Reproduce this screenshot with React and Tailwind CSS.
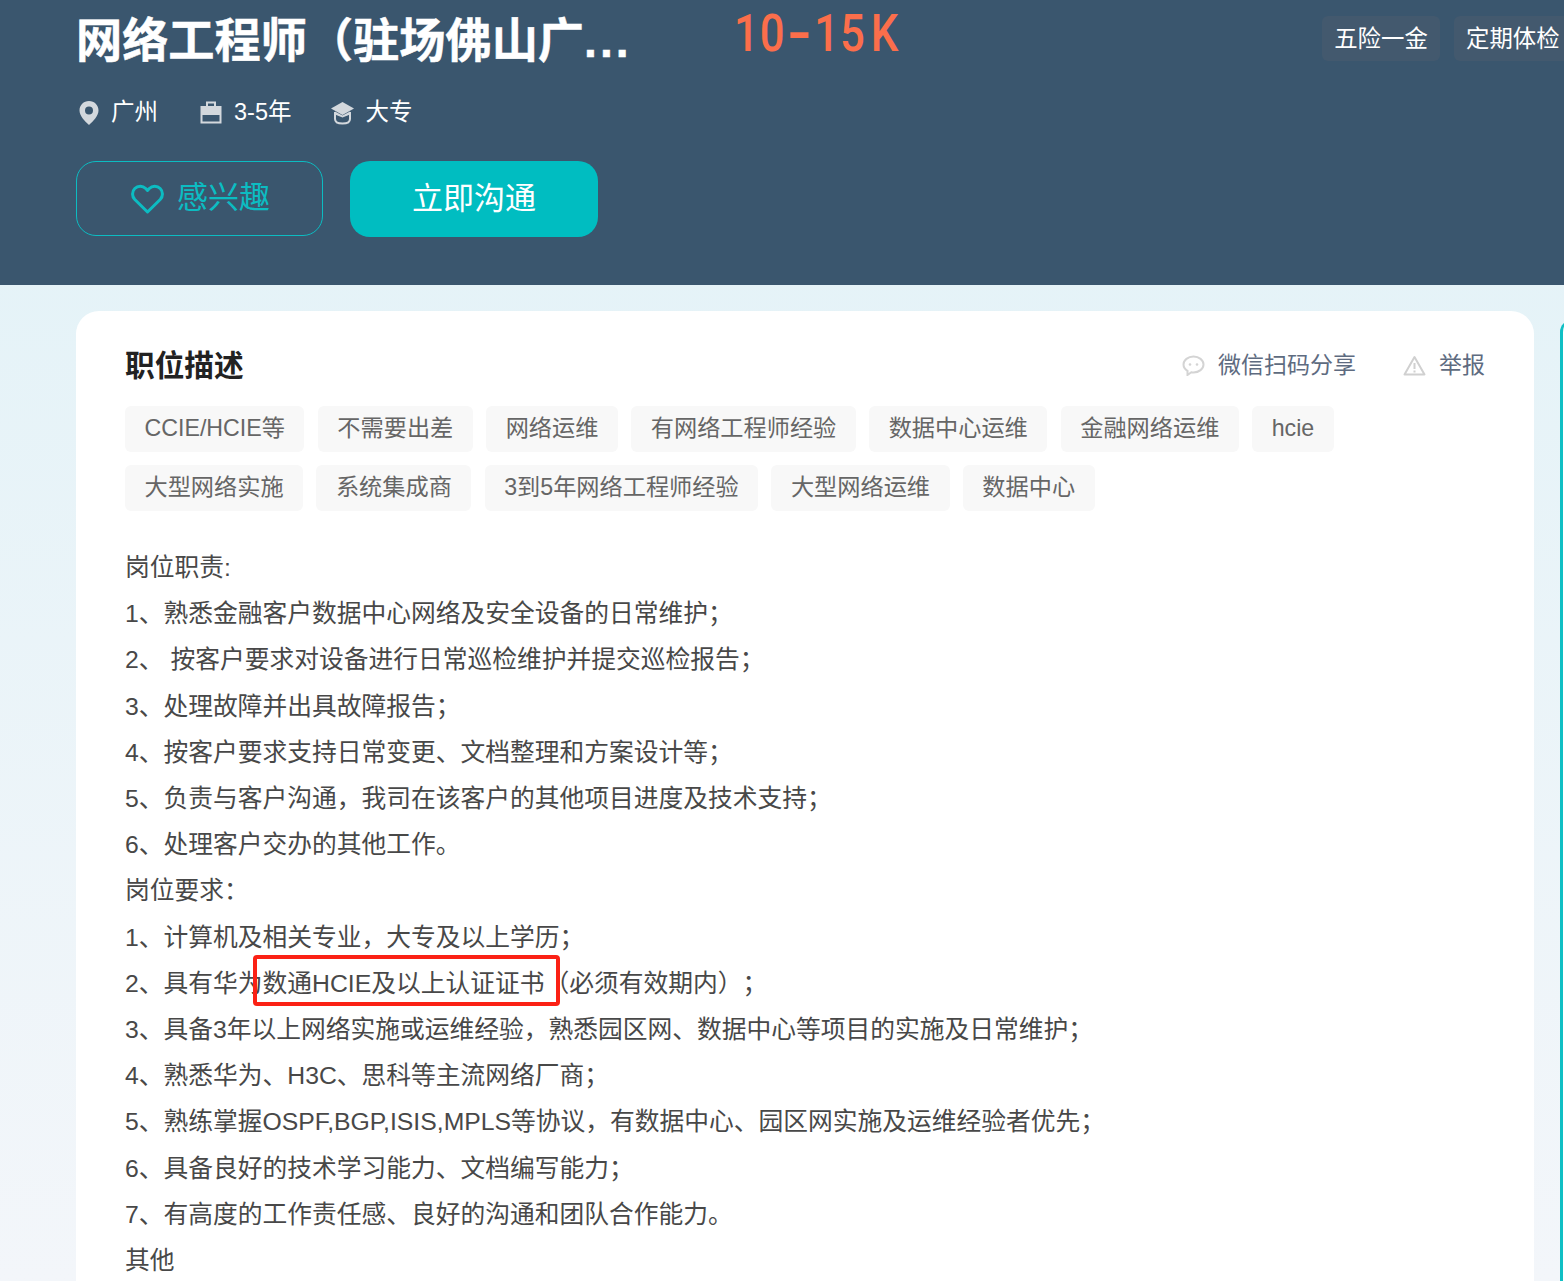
const FONT = "font-['Liberation_Sans','Noto_Sans_CJK_SC',sans-serif]";

const row1 = ["CCIE/HCIE等", "不需要出差", "网络运维", "有网络工程师经验", "数据中心运维", "金融网络运维", "hcie"];
const row2 = ["大型网络实施", "系统集成商", "3到5年网络工程师经验", "大型网络运维", "数据中心"];

const Tag = ({ children }) => (
  <span className="flex h-[46px] shrink-0 items-center rounded-[6px] bg-[#f8f8f8] px-[19.5px] pb-[2px] text-[23.2px] text-[#666666] whitespace-nowrap">
    {children}
  </span>
);

const lines = [
  "岗位职责:",
  "1、熟悉金融客户数据中心网络及安全设备的日常维护；",
  "2、 按客户要求对设备进行日常巡检维护并提交巡检报告；",
  "3、处理故障并出具故障报告；",
  "4、按客户要求支持日常变更、文档整理和方案设计等；",
  "5、负责与客户沟通，我司在该客户的其他项目进度及技术支持；",
  "6、处理客户交办的其他工作。",
  "岗位要求：",
  "1、计算机及相关专业，大专及以上学历；",
  "MARK",
  "3、具备3年以上网络实施或运维经验，熟悉园区网、数据中心等项目的实施及日常维护；",
  "4、熟悉华为、H3C、思科等主流网络厂商；",
  "5、熟练掌握OSPF,BGP,ISIS,MPLS等协议，有数据中心、园区网实施及运维经验者优先；",
  "6、具备良好的技术学习能力、文档编写能力；",
  "7、有高度的工作责任感、良好的沟通和团队合作能力。",
  "其他",
];

export default function App() {
  return (
    <div className={`${FONT} [text-spacing-trim:space-all] relative h-[1281px] w-[1564px] overflow-hidden bg-gradient-to-b from-[#e1f2f7] to-[#f3f6fa]`}>
      <header className="h-[285px] bg-[#3a566e] pl-[76px] pt-[10px]">
        <div className="flex h-[62px] items-start">
          <h1 className="w-[553px] pt-[1px] text-[46.200px] font-bold leading-[60px] whitespace-nowrap text-white [-webkit-text-stroke:0.5px_white]">
            网络工程师（驻场佛山广<span className="tracking-[3px]">...</span>
          </h1>
          <div className="ml-[105px] flex font-['Roboto',sans-serif] text-[52px] font-medium leading-[48px] text-[#fb6e4b] origin-left [transform:scaleX(0.84)]">
            <span className="tracking-[1px]">10</span>
            <span className="mx-[7px] inline-block origin-center [transform:scaleX(1.500)] font-bold">-</span>
            <span className="tracking-[1px]">15</span>
            <span className="ml-[6px]">K</span>
          </div>
          <div className="ml-auto mt-[6px] flex gap-[14px] overflow-hidden">
            <span className="flex h-[45px] w-[118px] shrink-0 items-center justify-center rounded-[6px] bg-[#43596e] pt-[2px] text-[23.400px] text-white">五险一金</span>
            <span className="flex h-[45px] w-[110px] shrink-0 items-center rounded-[6px] rounded-r-none bg-[#43596e] pl-[12px] pt-[2px] text-[23.400px] whitespace-nowrap text-white">定期体检</span>
          </div>
        </div>
        <div className="mt-[19px] flex h-[44px] items-center text-[23.500px] text-white">
          <svg className="mr-[11px] ml-[2px]" width="22" height="26" viewBox="0 0 22 26"><path fillRule="evenodd" fill="#d3d8dd" d="M11 1C5.600 1 1.500 5.200 1.500 10.400 1.500 16 7 21 11 25c4-4 9.500-9 9.500-14.600C20.500 5.200 16.400 1 11 1zm0 13.500a4 4 0 1 1 0-8 4 4 0 0 1 0 8z" /></svg>
          <span>广州</span>
          <svg className="ml-[41px] mr-[11px] mb-[2px]" width="24" height="24" viewBox="0 0 24 24"><path fillRule="evenodd" fill="#d3d8dd" d="M7 1.500h10V6h5.500v17.500h-21V6H7zM9 3.500V6h6V3.500zM3.500 15v6.500h17V15z" /></svg>
          <span>3-5年</span>
          <svg className="ml-[39px] mr-[10px] mb-[1px]" width="25" height="24" viewBox="0 0 25 24"><path fill="#d3d8dd" d="M12.500 1 24 7.500 12.500 14 1 7.500z" /><path fill="none" stroke="#d3d8dd" strokeWidth="2" d="M5 11v7c0 3 3 4.500 7.500 4.500S20 21 20 18v-7" /><path fill="#d3d8dd" d="M5 10.500l7.500 4 7.500-4v3l-7.500 3-7.500-3z" /></svg>
          <span>大专</span>
        </div>
        <div className="mt-[26px] flex gap-[27px]">
          <button className="flex h-[75px] w-[247px] items-center justify-center rounded-[20px] border border-[#0cbcc2] pl-[2px] text-[31px] text-[#0cbcc2]">
            <svg className="mr-[13px]" width="33" height="30" viewBox="0 0 33 30"><path fill="none" stroke="#0cbcc2" strokeWidth="3" strokeLinejoin="round" d="M16.500 28 3.800 15.500C.8 12.300.8 7.500 3.800 4.500c3-3 7.900-3 10.900 0l1.800 1.900 1.800-1.900c3-3 7.900-3 10.900 0 3 3 3 7.800 0 11z" /></svg>
            感兴趣
          </button>
          <button className="flex h-[76px] w-[248px] items-center justify-center rounded-[20px] bg-[#00bdc1] text-[31px] text-white">
            立即沟通
          </button>
        </div>
      </header>

      <main className="absolute left-[76px] top-[311px] h-[1000px] w-[1458px] rounded-[23px] bg-white pl-[49px] pr-[49px] pt-[32px]">
        <div className="flex h-[46px] items-center justify-between">
          <h2 className="text-[29.700px] font-bold leading-[46px] text-[#222222]">职位描述</h2>
          <div className="flex items-center pb-[2px] text-[23px] text-[#5e6b80]">
            <svg className="mr-[13px]" width="23" height="21" viewBox="0 0 23 21"><path fill="none" stroke="#d4d4d4" strokeWidth="2" d="M11.500 1.500c5.500 0 10 3.600 10 8s-4.500 8-10 8c-.8 0-1.500-.1-2.200-.2L5.500 20v-4.200C3 14.300 1.500 12 1.500 9.500c0-4.400 4.500-8 10-8z" /><circle cx="8" cy="9.500" r="1.300" fill="#d4d4d4" /><circle cx="15" cy="9.500" r="1.300" fill="#d4d4d4" /></svg>
            <span>微信扫码分享</span>
            <svg className="ml-[47px] mr-[13px]" width="23" height="21" viewBox="0 0 23 21"><path fill="none" stroke="#d0d0d0" strokeWidth="2" strokeLinejoin="round" d="M11.500 2 21.500 19.500h-20z" /><path stroke="#d0d0d0" strokeWidth="2" d="M11.500 8v6M11.500 15.500v2" /></svg>
            <span>举报</span>
          </div>
        </div>
        <div className="mt-[17px] flex gap-[13.400px]">
          {row1.map((t) => <Tag key={t}>{t}</Tag>)}
        </div>
        <div className="mt-[13px] flex gap-[13.300px]">
          {row2.map((t) => <Tag key={t}>{t}</Tag>)}
        </div>
        <div className="mt-[34px] text-[24.750px] leading-[46.200px] text-[#484848]">
          {lines.map((l) =>
            l === "MARK" ? (
              <div key={l} className="relative whitespace-nowrap">
                2、具有华为数通HCIE及以上认证证书（必须有效期内）；
                <span className="absolute left-[127.500px] top-[-5.500px] h-[51px] w-[307px] rounded-[4px] border-[4px] border-[#fb2115]" />
              </div>
            ) : (
              <div key={l} className="whitespace-nowrap">{l}</div>
            )
          )}
        </div>
      </main>
      <div className="absolute left-[1560px] top-[320px] h-[970px] w-[20px] rounded-tl-[12px] bg-white border-l-[3px] border-[#10bfc4]" />
    </div>
  );
}
